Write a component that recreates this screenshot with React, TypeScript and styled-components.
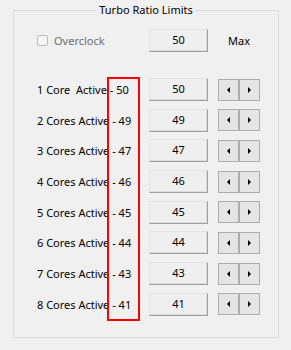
import { createGlobalStyle } from "styled-components";
import styled from "styled-components";

const cores = [
  { label: "1 Core  Active", value: 50 },
  { label: "2 Cores Active", value: 49 },
  { label: "3 Cores Active", value: 47 },
  { label: "4 Cores Active", value: 46 },
  { label: "5 Cores Active", value: 45 },
  { label: "6 Cores Active", value: 44 },
  { label: "7 Cores Active", value: 43 },
  { label: "8 Cores Active", value: 41 },
];

export default function App() {
  return (
    <>
      <GlobalStyle />
      <Window>
        <Group>
          <Title>Turbo Ratio Limits</Title>
          <TopRow>
            <CheckLabel>
              <CheckBox />
              <span>Overclock</span>
            </CheckLabel>
            <ValueButton>50</ValueButton>
            <MaxLabel>Max</MaxLabel>
          </TopRow>
          <Rows>
            {cores.map((c) => (
              <Row key={c.label}>
                <RowLabel>
                  {c.label} - {c.value}
                </RowLabel>
                <ValueButton>{c.value}</ValueButton>
                <Spinner>
                  <SpinHalf>
                    <Arrow $dir="left" />
                  </SpinHalf>
                  <SpinHalf>
                    <Arrow $dir="right" />
                  </SpinHalf>
                </Spinner>
              </Row>
            ))}
            <Highlight />
          </Rows>
        </Group>
      </Window>
    </>
  );
}

const GlobalStyle = createGlobalStyle`
  body {
    margin: 0;
    background: #f0f0f0;
    font-family: "Noto Sans", "Open Sans", sans-serif;
    font-size: 11px;
    color: #000;
  }
`;

const Window = styled.div`
  width: 291px;
  height: 350px;
  padding: 10px 0 0 13px;
  box-sizing: border-box;
`;

const Group = styled.div`
  width: 266px;
  height: 328px;
  box-sizing: border-box;
  border: 1px solid #dcdcdc;
  display: flex;
  flex-direction: column;
  padding: 0 0 0 23px;
`;

const Title = styled.div`
  align-self: center;
  margin: -9px 0 0 -23px;
  padding: 0 3px;
  background: #f0f0f0;
  line-height: 16px;
  color: #000;
`;

const TopRow = styled.div`
  display: flex;
  align-items: center;
  height: 23px;
  margin-top: 11px;
`;

const CheckLabel = styled.div`
  width: 112px;
  display: flex;
  align-items: center;
  gap: 6px;
  color: #6d6d6d;
`;

const CheckBox = styled.div`
  width: 11px;
  height: 11px;
  box-sizing: border-box;
  border: 1px solid #bcbcbc;
  border-radius: 2px;
  background: #f5f5f5;
`;

const ValueButton = styled.div`
  width: 59px;
  height: 23px;
  box-sizing: border-box;
  background: #efefef;
  border-top: 1px solid #e3e3e3;
  border-left: 1px solid #e3e3e3;
  border-right: 1px solid #a0a0a0;
  border-bottom: 1px solid #a0a0a0;
  box-shadow: inset -1px -1px 0 #dcdcdc;
  display: flex;
  align-items: center;
  justify-content: center;
  padding-bottom: 2px;
`;

const MaxLabel = styled.span`
  margin-left: 20px;
`;

const Rows = styled.div`
  position: relative;
  display: flex;
  flex-direction: column;
  gap: 7.7px;
  margin-top: 26px;
`;

const Row = styled.div`
  display: flex;
  align-items: center;
  height: 23px;
`;

const RowLabel = styled.span`
  width: 112px;
  white-space: pre;
`;

const Spinner = styled.div`
  margin-left: 10px;
  width: 42px;
  height: 22px;
  box-sizing: border-box;
  border: 1px solid #adadad;
  display: flex;
  gap: 2px;
  background: #adadad;
`;

const SpinHalf = styled.div`
  flex: 1;
  background: #e5e5e5;
  display: flex;
  align-items: center;
  justify-content: center;
`;

const Arrow = styled.div<{ $dir: "left" | "right" }>`
  width: 0;
  height: 0;
  border-top: 3px solid transparent;
  border-bottom: 3px solid transparent;
  ${({ $dir }) =>
    $dir === "left"
      ? `border-right: 3px solid #000;`
      : `border-left: 3px solid #000;`}
`;

const Highlight = styled.div`
  position: absolute;
  left: 70px;
  top: -1px;
  width: 33px;
  height: 244px;
  box-sizing: border-box;
  border: 2px solid #f00;
  pointer-events: none;
`;
